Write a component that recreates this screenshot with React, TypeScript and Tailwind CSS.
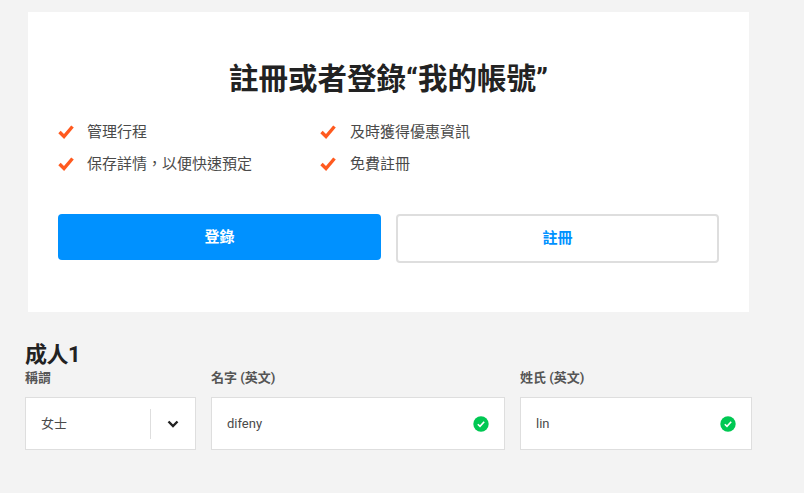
const FONT = "font-['Roboto','Liberation_Sans','Noto_Sans_CJK_TC',sans-serif]";

const BENEFITS = [
  ["管理行程", "及時獲得優惠資訊"],
  ["保存詳情，以便快速預定", "免費註冊"],
];

function Tick() {
  return (
    <svg width="16" height="14" viewBox="0 0 16 14" className="shrink-0">
      <path d="M1.5 7 L6 11.5 L14.5 1.5" fill="none" stroke="#ff5a1f" strokeWidth="3.4" />
    </svg>
  );
}

function Benefit({ text, gap }: { text: string; gap: string }) {
  return (
    <div className={`flex items-center ${gap}`}>
      <Tick />
      <span className="text-[15px] leading-[20px] text-[#4a4a4a]">{text}</span>
    </div>
  );
}

function Valid() {
  return (
    <svg width="16" height="16" viewBox="0 0 16 16" className="shrink-0">
      <circle cx="8" cy="8" r="7.7" fill="#00c853" />
      <path d="M4.8 8.2 L7 10.4 L11.2 5.8" fill="none" stroke="#fff" strokeWidth="1.6" />
    </svg>
  );
}

function TextField({ label, value, width }: { label: string; value: string; width: string }) {
  return (
    <div className={`flex flex-col ${width}`}>
      <label className="text-[13px] leading-[18px] font-bold text-[#555] mb-[10px]">{label}</label>
      <div className="h-[53px] bg-white border border-[#dedede] flex items-center justify-between pl-[15px] pr-[15px]">
        <span className="text-[13px] text-[#4a4a4a]">{value}</span>
        <Valid />
      </div>
    </div>
  );
}

export default function App() {
  return (
    <div className={`${FONT} w-[804px] h-[493px] overflow-hidden bg-[#f3f3f3]`}>
      <div className="ml-[28px] pt-[12px] w-[721px]">
        <section className="h-[300px] bg-white px-[30px] pt-[45px]">
          <h1 className="text-center text-[29.5px] leading-[44px] font-bold text-[#222]">註冊或者登錄“我的帳號”</h1>
          <div className="mt-[21px] flex flex-col gap-[12px]">
            {BENEFITS.map((row) => (
              <div key={row[0]} className="grid grid-cols-[262px_1fr]">
                <Benefit text={row[0]} gap="gap-[13px]" />
                <Benefit text={row[1]} gap="gap-[14px]" />
              </div>
            ))}
          </div>
          <div className="mt-[40px] flex items-start gap-[15px]">
            <button className="w-[323px] h-[46px] rounded-[4px] bg-[#0091ff] text-white text-[15px] font-bold">登錄</button>
            <button className="w-[323px] h-[49px] rounded-[4px] bg-white border-2 border-[#dedede] text-[#0091ff] text-[15px] font-bold">註冊</button>
          </div>
        </section>
      </div>
      <div className="ml-[25px] mt-[29px]">
        <h2 className="text-[22px] leading-[28px] font-bold text-[#222] tracking-[-0.5px]">成人1</h2>
        <div className="flex gap-[15px]">
          <div className="flex flex-col w-[171px]">
            <label className="text-[13px] leading-[18px] font-bold text-[#555] mb-[10px]">稱謂</label>
            <div className="h-[53px] bg-white border border-[#dedede] flex items-center pl-[15px]">
              <span className="flex-1 text-[13px] text-[#4a4a4a]">女士</span>
              <div className="w-px h-[30px] bg-[#dedede]" />
              <svg width="12" height="8" viewBox="0 0 12 8" className="ml-[16px] mr-[16px]">
                <path d="M1.5 1.5 L6 6 L10.5 1.5" fill="none" stroke="#222" strokeWidth="2.4" />
              </svg>
            </div>
          </div>
          <TextField label="名字 (英文)" value="difeny" width="w-[294px]" />
          <TextField label="姓氏 (英文)" value="lin" width="w-[232px]" />
        </div>
      </div>
    </div>
  );
}
